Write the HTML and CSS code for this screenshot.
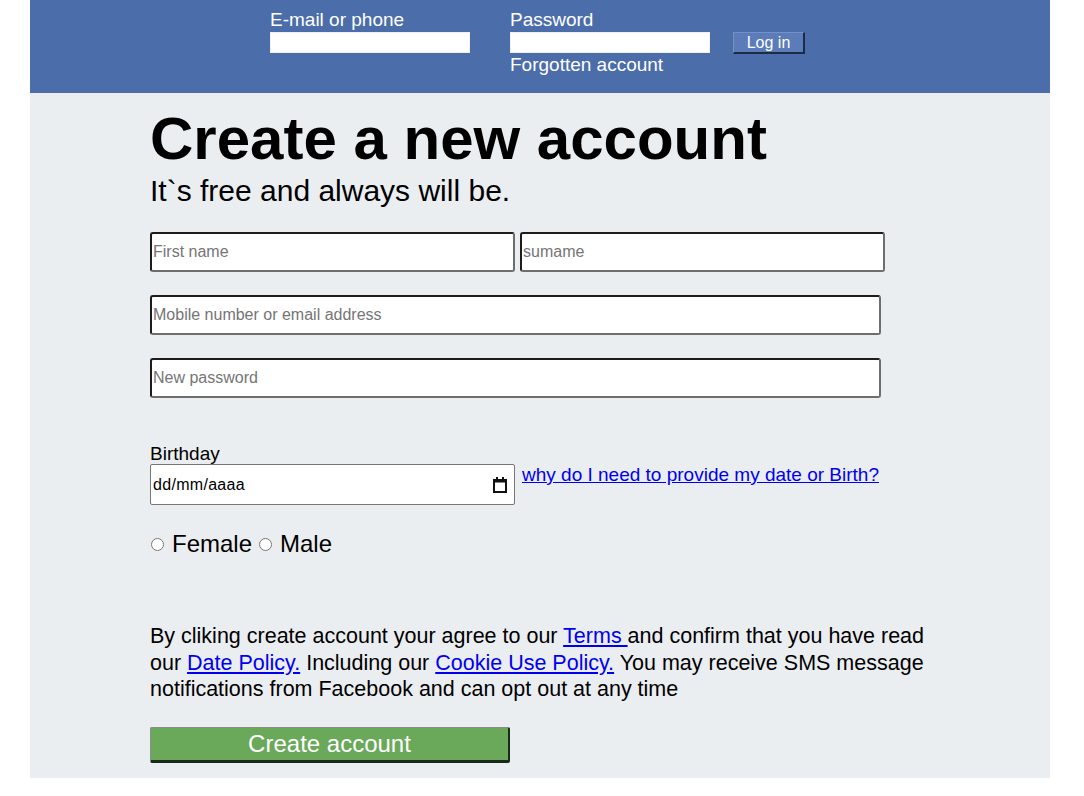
FILE: index.html
```html
<!DOCTYPE html>
<html lang="en">
<head>
<meta charset="utf-8">
<title>Create a new account</title>
<link rel="stylesheet" href="styles.css">
</head>
<body>
<div class="page">
  <header class="topbar">
    <div class="login-field">
      <label class="top-label">E-mail or phone</label>
      <input class="top-input" type="text">
    </div>
    <div class="login-field">
      <label class="top-label">Password</label>
      <input class="top-input" type="password">
      <a class="forgot">Forgotten account</a>
    </div>
    <button class="login-btn">Log in</button>
  </header>
  <main class="content">
    <h1 class="title">Create a new account</h1>
    <p class="subtitle">It`s free and always will be.</p>
    <div class="row">
      <input class="field half" type="text" placeholder="First name">
      <input class="field half" type="text" placeholder="sumame">
    </div>
    <div class="row">
      <input class="field full" type="text" placeholder="Mobile number or email address">
    </div>
    <div class="row">
      <input class="field full" type="password" placeholder="New password">
    </div>
    <div class="birthday">
      <div class="bday-label">Birthday</div>
      <div class="bday-row">
        <div class="date-box">
          <input class="date-text" type="text" value="dd/mm/aaaa">
          <svg class="cal" width="16" height="18" viewBox="0 0 16 18"><rect x="2" y="4" width="12" height="12" fill="none" stroke="#111" stroke-width="2"/><rect x="2" y="3.5" width="12" height="3" fill="#111"/><rect x="4" y="1" width="2" height="3" fill="#111"/><rect x="10" y="1" width="2" height="3" fill="#111"/></svg>
        </div>
        <a class="why" href="#">why do I need to provide my date or Birth?</a>
      </div>
    </div>
    <div class="gender">
      <input class="radio" type="radio" name="g" id="f"><label for="f">Female</label>
      <input class="radio" type="radio" name="g" id="m"><label for="m">Male</label>
    </div>
    <p class="terms">By cliking create account your agree to our <a href="#">Terms </a>and confirm that you have read our <a href="#">Date Policy.</a> Including our <a href="#">Cookie Use Policy.</a> You may receive SMS message notifications from Facebook and can opt out at any time</p>
    <button class="create-btn">Create account</button>
  </main>
</div>
</body>
</html>
```
FILE: styles.css
```css
body {
  margin: 0;
  font-family: "Liberation Sans", Arial, sans-serif;
  background: #fff;
}
.page {
  margin: 0 34px 0 30px;
  width: 1020px;
}
.topbar {
  background: #4b6daa;
  height: 93px;
  box-sizing: border-box;
  padding: 9px 0 0 240px;
  display: flex;
  align-items: flex-start;
  color: #fff;
}
.login-field {
  display: flex;
  flex-direction: column;
  width: 200px;
  margin-right: 40px;
}
.login-field + .login-field {
  margin-right: 23px;
}
.top-label {
  font-size: 19px;
  line-height: 22px;
  white-space: nowrap;
}
.top-input {
  margin: 1px 0 0;
  width: 200px;
  height: 21px;
  box-sizing: border-box;
  border: 1px solid #f0f0f0;
  background: #fff;
  padding: 0;
}
.forgot {
  margin-top: 1px;
  font-size: 19px;
  line-height: 22px;
  color: #fff;
  white-space: nowrap;
}
.login-btn {
  margin-top: 23px;
  width: 72px;
  height: 22px;
  box-sizing: border-box;
  background: #5b7cb9;
  color: #fff;
  font-family: "Liberation Sans", Arial, sans-serif;
  font-size: 16px;
  line-height: 18px;
  padding: 0;
  border-style: solid;
  border-width: 1px 2px 2px 1px;
  border-color: #7590c4 #1d2b45 #1d2b45 #7590c4;
}
.content {
  background: #ebeef1;
  padding: 16px 0 15px 120px;
}
.title {
  margin: 0;
  font-size: 60px;
  line-height: 60px;
  font-weight: bold;
  color: #000;
}
.subtitle {
  margin: 7px 0 0;
  font-size: 30px;
  line-height: 30px;
  color: #000;
}
.row {
  display: flex;
  gap: 5px;
  margin-top: 23px;
}
.subtitle + .row {
  margin-top: 26px;
}
.field {
  height: 40px;
  box-sizing: border-box;
  border-style: solid;
  border-width: 2px;
  border-color: #1c1c1c #6e6e6e #6e6e6e #1c1c1c;
  border-radius: 3px;
  background: #fff;
  padding: 0 0 0 1px;
  font-family: "Liberation Sans", Arial, sans-serif;
  font-size: 16px;
  color: #000;
}
.field::placeholder {
  color: #757575;
}
.half {
  width: 365px;
}
.full {
  width: 731px;
}
.birthday {
  margin-top: 45px;
}
.bday-label {
  font-size: 19px;
  line-height: 21px;
  color: #000;
}
.bday-row {
  display: flex;
  align-items: flex-start;
  gap: 7px;
}
.date-box {
  width: 365px;
  height: 41px;
  box-sizing: border-box;
  border: 1px solid #767676;
  border-radius: 2px;
  background: #fff;
  display: flex;
  align-items: center;
  padding: 0 6px 0 2px;
}
.date-text {
  flex: 1;
  border: none;
  outline: none;
  padding: 0;
  font-family: "Liberation Sans", Arial, sans-serif;
  font-size: 16px;
  letter-spacing: 0.3px;
  color: #000;
  background: transparent;
}
.cal {
  display: block;
}
.why {
  font-size: 19px;
  line-height: 22px;
  color: #0000ee;
}
.gender {
  margin-top: 25px;
  display: flex;
  align-items: center;
  font-size: 24px;
  line-height: 28px;
  color: #000;
}
.radio {
  margin: 0 8px 0 1px;
  width: 13px;
  height: 13px;
}
.gender label + .radio {
  margin-left: 7px;
}
.terms {
  margin: 65px 0 0;
  width: 790px;
  font-size: 21.5px;
  line-height: 26.5px;
  color: #000;
}
.terms a {
  color: #0000ee;
}
.create-btn {
  display: block;
  margin-top: 24px;
  width: 360px;
  height: 36px;
  box-sizing: border-box;
  background: #6aa85a;
  color: #fff;
  font-family: "Liberation Sans", Arial, sans-serif;
  font-size: 24px;
  line-height: 30px;
  padding: 0;
  border-style: solid;
  border-width: 1px 2px 3px 1px;
  border-color: #8a8a8a #1a2a18 #1a2a18 #8a8a8a;
  border-radius: 2px;
}
```
